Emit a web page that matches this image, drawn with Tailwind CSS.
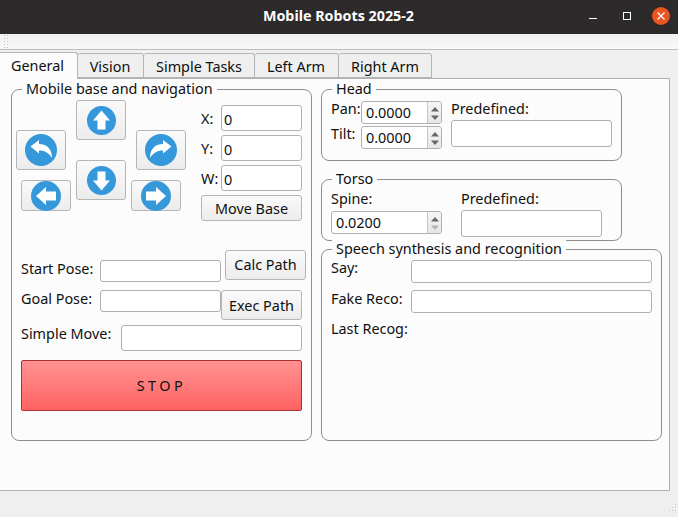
<!DOCTYPE html>
<html lang="en">
<head>
    <meta charset="UTF-8">
    <title>Mobile Robots 2025-2</title>
    <script src="https://cdn.jsdelivr.net/npm/@tailwindcss/browser@4"></script>
</head>
<body class="w-[678px] h-[517px] overflow-hidden bg-[#efefef] text-[#101010] text-[14.4px] leading-[18px] font-['Noto_Sans',sans-serif]">
    <!-- Title bar -->
    <div class="relative h-[34px] bg-[#2c2a2a] flex items-center justify-center text-white font-bold text-[14.3px] pb-[3px]">
        <span class="-ml-[1px]">Mobile Robots 2025-2</span>
        <div class="absolute right-0 top-0 h-[34px] flex items-center">
            <div class="w-[8px] h-[1px] bg-white mr-[26px] mt-[3px]"></div>
            <div class="w-[8px] h-[8px] border border-white mr-[21px] mb-[3px]"></div>
            <div class="w-[18px] h-[18px] rounded-full bg-[#e95420] flex items-center justify-center mr-[8px] mb-[3px]">
                <svg width="10" height="10" viewBox="0 0 10 10"><path d="M1.5 1.5L8.5 8.5M8.5 1.5L1.5 8.5" stroke="#fff" stroke-width="1.3"/></svg>
            </div>
        </div>
    </div>

    <!-- Toolbar strip -->
    <div class="h-[16px] bg-gradient-to-b from-[#f1f1f1] to-[#f8f8f8] border-b border-[#bdbdbd] flex items-center pl-[4px]">
        <svg width="5" height="13" viewBox="0 0 5 13" fill="#c4c4c4"><rect x="0" y="0" width="1" height="1"/><rect x="3" y="0" width="1" height="1"/><rect x="0" y="3" width="1" height="1"/><rect x="3" y="3" width="1" height="1"/><rect x="0" y="6" width="1" height="1"/><rect x="3" y="6" width="1" height="1"/><rect x="0" y="9" width="1" height="1"/><rect x="3" y="9" width="1" height="1"/><rect x="0" y="12" width="1" height="1"/><rect x="3" y="12" width="1" height="1"/></svg>
    </div>

    <!-- Tabs -->
    <div class="h-[28px] flex items-end relative z-10">
        <div class="w-[78px] h-[27px] pr-[2px] bg-[#fcfcfc] border border-b-0 border-l-0 border-[#b5b5b5] rounded-tr-[3px] flex items-center justify-center -mb-[1px]">General</div>
        <div class="w-[66px] h-[25px] pt-[2px] pr-[1px] bg-[#efefef] border border-l-0 border-[#b5b5b5] rounded-t-[3px] flex items-center justify-center">Vision</div>
        <div class="w-[111px] h-[25px] pt-[2px] bg-[#efefef] border border-l-0 border-[#b5b5b5] rounded-t-[3px] flex items-center justify-center">Simple Tasks</div>
        <div class="w-[84px] h-[25px] pt-[2px] pr-[1px] bg-[#efefef] border border-l-0 border-[#b5b5b5] rounded-t-[3px] flex items-center justify-center">Left Arm</div>
        <div class="w-[93px] h-[25px] pt-[2px] bg-[#efefef] border border-l-0 border-[#b5b5b5] rounded-t-[3px] flex items-center justify-center">Right Arm</div>
    </div>

    <!-- Tab pane -->
    <div class="w-[670px] h-[413px] bg-[#fcfcfc] border-t border-r border-b border-[#b0b0b0] flex pl-[11px] pt-[10px] gap-[9px] items-start">

        <!-- Mobile base -->
        <div class="relative w-[301px] h-[352px] border border-[#8f8f8f] rounded-[8px] shrink-0">
            <span class="absolute left-[10px] -top-[10px] px-[4px] bg-[#fcfcfc]">Mobile base and navigation</span>
            <div class="flex pt-[10px] pl-[4px]">
                <!-- Arrow buttons -->
                <div class="w-[54px] flex flex-col pt-[30px]">
                    <button class="w-[50px] h-[40px] bg-gradient-to-b from-[#fafafa] to-[#ececec] border border-[#b5b5b5] rounded-[3px] flex items-center justify-center">
                        <svg width="32" height="32" viewBox="0 0 32 32"><circle cx="16" cy="16" r="16" fill="#3498db"/><path d="M5.5 12.5L14 6V10C21 10 27 14 27 24C24 19 20 16.5 14 16.5V19.5Z" fill="#fff"/></svg>
                    </button>
                    <button class="w-[50px] h-[31px] ml-[5px] mt-[10px] bg-gradient-to-b from-[#fafafa] to-[#ececec] border border-[#b5b5b5] rounded-[3px] flex items-center justify-center">
                        <svg width="30" height="30" viewBox="0 0 30 30"><circle cx="15" cy="15" r="15" fill="#3498db"/><path d="M5 15L15 6V10.5H25V19.5H15V24Z" fill="#fff"/></svg>
                    </button>
                </div>
                <div class="w-[50px] ml-[6px] flex flex-col">
                    <button class="w-[50px] h-[40px] bg-gradient-to-b from-[#fafafa] to-[#ececec] border border-[#b5b5b5] rounded-[3px] flex items-center justify-center">
                        <svg width="29" height="29" viewBox="0 0 29 29"><circle cx="14.5" cy="14.5" r="14.5" fill="#3498db"/><path d="M14.5 4.5L23 14.5H18.5V23.5H10.5V14.5H6Z" fill="#fff"/></svg>
                    </button>
                    <button class="w-[50px] h-[40px] mt-[20px] bg-gradient-to-b from-[#fafafa] to-[#ececec] border border-[#b5b5b5] rounded-[3px] flex items-center justify-center">
                        <svg width="29" height="29" viewBox="0 0 29 29"><circle cx="14.5" cy="14.5" r="14.5" fill="#3498db"/><path d="M14.5 24.5L23 14.5H18.5V5.5H10.5V14.5H6Z" fill="#fff"/></svg>
                    </button>
                </div>
                <div class="w-[55px] ml-[5px] flex flex-col pt-[30px]">
                    <button class="w-[50px] h-[40px] ml-[5px] bg-gradient-to-b from-[#fafafa] to-[#ececec] border border-[#b5b5b5] rounded-[3px] flex items-center justify-center">
                        <svg width="32" height="32" viewBox="0 0 32 32"><circle cx="16" cy="16" r="16" fill="#3498db"/><path d="M26.5 12.5L18 6V10C11 10 5 14 5 24C8 19 12 16.5 18 16.5V19.5Z" fill="#fff"/></svg>
                    </button>
                    <button class="w-[50px] h-[31px] mt-[10px] bg-gradient-to-b from-[#fafafa] to-[#ececec] border border-[#b5b5b5] rounded-[3px] flex items-center justify-center">
                        <svg width="30" height="30" viewBox="0 0 30 30"><circle cx="15" cy="15" r="15" fill="#3498db"/><path d="M25 15L15 6V10.5H5V19.5H15V24Z" fill="#fff"/></svg>
                    </button>
                </div>
                <!-- X / Y / W -->
                <div class="ml-[15px] pt-[5px] flex flex-col gap-[4px]">
                    <div class="flex items-center"><span class="w-[20px] pt-[2px]">X:</span><input value="0" class="w-[81px] h-[26px] pt-[2px] bg-white border border-[#b0b0b0] rounded-[3px] px-[2px] outline-none"></div>
                    <div class="flex items-center"><span class="w-[20px] pt-[2px]">Y:</span><input value="0" class="w-[81px] h-[26px] pt-[2px] bg-white border border-[#b0b0b0] rounded-[3px] px-[2px] outline-none"></div>
                    <div class="flex items-center"><span class="w-[20px] pt-[2px]">W:</span><input value="0" class="w-[81px] h-[26px] pt-[2px] bg-white border border-[#b0b0b0] rounded-[3px] px-[2px] outline-none"></div>
                    <button class="w-[101px] h-[26px] pt-[2px] bg-gradient-to-b from-[#fafafa] to-[#ececec] border border-[#b5b5b5] rounded-[3px]">Move Base</button>
                </div>
            </div>

            <!-- Path planning -->
            <div class="pl-[9px] mt-[29px] flex flex-col">
                <div class="h-[32px] flex">
                    <span class="w-[79px] pt-[10px]">Start Pose:</span>
                    <input class="w-[121px] h-[22px] mt-[10px] bg-white border border-[#b0b0b0] rounded-[3px] outline-none">
                    <button class="w-[81px] h-[30px] ml-[4px] bg-gradient-to-b from-[#fafafa] to-[#ececec] border border-[#b5b5b5] rounded-[3px]">Calc Path</button>
                </div>
                <div class="h-[30px] flex mt-[8px]">
                    <span class="w-[79px]">Goal Pose:</span>
                    <input class="w-[121px] h-[22px] bg-white border border-[#b0b0b0] rounded-[3px] outline-none">
                    <button class="w-[81px] h-[30px] pt-[2px] bg-gradient-to-b from-[#fafafa] to-[#ececec] border border-[#b5b5b5] rounded-[3px]">Exec Path</button>
                </div>
                <div class="h-[26px] flex mt-[5px]">
                    <span class="w-[100px]">Simple Move:</span>
                    <input class="w-[181px] h-[26px] bg-white border border-[#b0b0b0] rounded-[3px] outline-none">
                </div>
                <button class="w-[281px] h-[51px] mt-[9px] bg-gradient-to-b from-[#ff9191] to-[#ff6262] border border-[#a83232] rounded-[2px] tracking-[3.5px]">STOP</button>
            </div>
        </div>

        <!-- Right column -->
        <div class="flex flex-col">
            <!-- Head -->
            <div class="relative w-[301px] h-[72px] border border-[#8f8f8f] rounded-[8px] flex pl-[9px]">
                <span class="absolute left-[10px] -top-[10px] px-[4px] bg-[#fcfcfc]">Head</span>
                <div class="w-[30px] pt-[10px] flex flex-col gap-[7px]">
                    <span>Pan:</span>
                    <span>Tilt:</span>
                </div>
                <div class="pt-[11px] flex flex-col gap-[2px]">
                    <div class="w-[81px] h-[23px] flex bg-white border border-[#b0b0b0] rounded-[3px] overflow-hidden">
                        <input value="0.0000" class="w-[65px] pl-[4px] pt-[1px] outline-none">
                        <div class="w-[14px] bg-gradient-to-b from-[#f6f6f6] to-[#e6e6e6] border-l border-[#c4c4c4] flex items-center justify-center">
                            <svg width="8" height="16" viewBox="0 0 8 16" fill="#666"><path d="M4 2L8 6.5H0Z"/><path d="M4 15L8 10.5H0Z"/></svg>
                        </div>
                    </div>
                    <div class="w-[81px] h-[23px] flex bg-white border border-[#b0b0b0] rounded-[3px] overflow-hidden">
                        <input value="0.0000" class="w-[65px] pl-[4px] pt-[1px] outline-none">
                        <div class="w-[14px] bg-gradient-to-b from-[#f6f6f6] to-[#e6e6e6] border-l border-[#c4c4c4] flex items-center justify-center">
                            <svg width="8" height="16" viewBox="0 0 8 16" fill="#666"><path d="M4 2L8 6.5H0Z"/><path d="M4 15L8 10.5H0Z"/></svg>
                        </div>
                    </div>
                </div>
                <div class="ml-[9px] pt-[10px] flex flex-col">
                    <span class="h-[20px]">Predefined:</span>
                    <input class="w-[161px] h-[27px] bg-white border border-[#b0b0b0] rounded-[3px] outline-none">
                </div>
            </div>

            <!-- Torso -->
            <div class="relative w-[301px] h-[62px] mt-[18px] border border-[#8f8f8f] rounded-[8px] flex pl-[9px]">
                <span class="absolute left-[10px] -top-[10px] px-[4px] bg-[#fcfcfc]">Torso</span>
                <div class="pt-[10px] flex flex-col">
                    <span class="h-[21px]">Spine:</span>
                    <div class="w-[111px] h-[23px] flex bg-white border border-[#b0b0b0] rounded-[3px] overflow-hidden">
                        <input value="0.0200" class="w-[95px] pl-[4px] pt-[1px] outline-none">
                        <div class="w-[14px] bg-gradient-to-b from-[#f6f6f6] to-[#e6e6e6] border-l border-[#c4c4c4] flex items-center justify-center">
                            <svg width="8" height="16" viewBox="0 0 8 16"><path d="M4 2L8 6.5H0Z" fill="#666"/><path d="M4 15L8 10.5H0Z" fill="#b4b4b4"/></svg>
                        </div>
                    </div>
                </div>
                <div class="ml-[19px] pt-[10px] flex flex-col">
                    <span class="h-[20px]">Predefined:</span>
                    <input class="w-[141px] h-[27px] bg-white border border-[#b0b0b0] rounded-[3px] outline-none">
                </div>
            </div>

            <!-- Speech -->
            <div class="relative w-[341px] h-[192px] mt-[8px] border border-[#8f8f8f] rounded-[8px] pl-[9px] pt-[10px] flex flex-col">
                <span class="absolute left-[10px] -top-[10px] px-[4px] bg-[#fcfcfc]">Speech synthesis and recognition</span>
                <div class="h-[22px] flex">
                    <span class="w-[80px] -mt-[1px]">Say:</span>
                    <input class="w-[241px] h-[23px] bg-white border border-[#b0b0b0] rounded-[3px] outline-none">
                </div>
                <div class="h-[22px] mt-[8px] flex">
                    <span class="w-[80px]">Fake Reco:</span>
                    <input class="w-[241px] h-[23px] bg-white border border-[#b0b0b0] rounded-[3px] outline-none">
                </div>
                <span class="mt-[8px]">Last Recog:</span>
            </div>
        </div>
    </div>

    <!-- Size grip -->
    <div class="flex justify-end pr-[1px] pt-[13px]">
        <svg width="10" height="10" viewBox="0 0 10 10" fill="#c4c4c4"><rect x="8" y="0" width="1" height="1"/><rect x="5" y="3" width="1" height="1"/><rect x="8" y="3" width="1" height="1"/><rect x="2" y="6" width="1" height="1"/><rect x="5" y="6" width="1" height="1"/><rect x="8" y="6" width="1" height="1"/></svg>
    </div>
</body>
</html>
